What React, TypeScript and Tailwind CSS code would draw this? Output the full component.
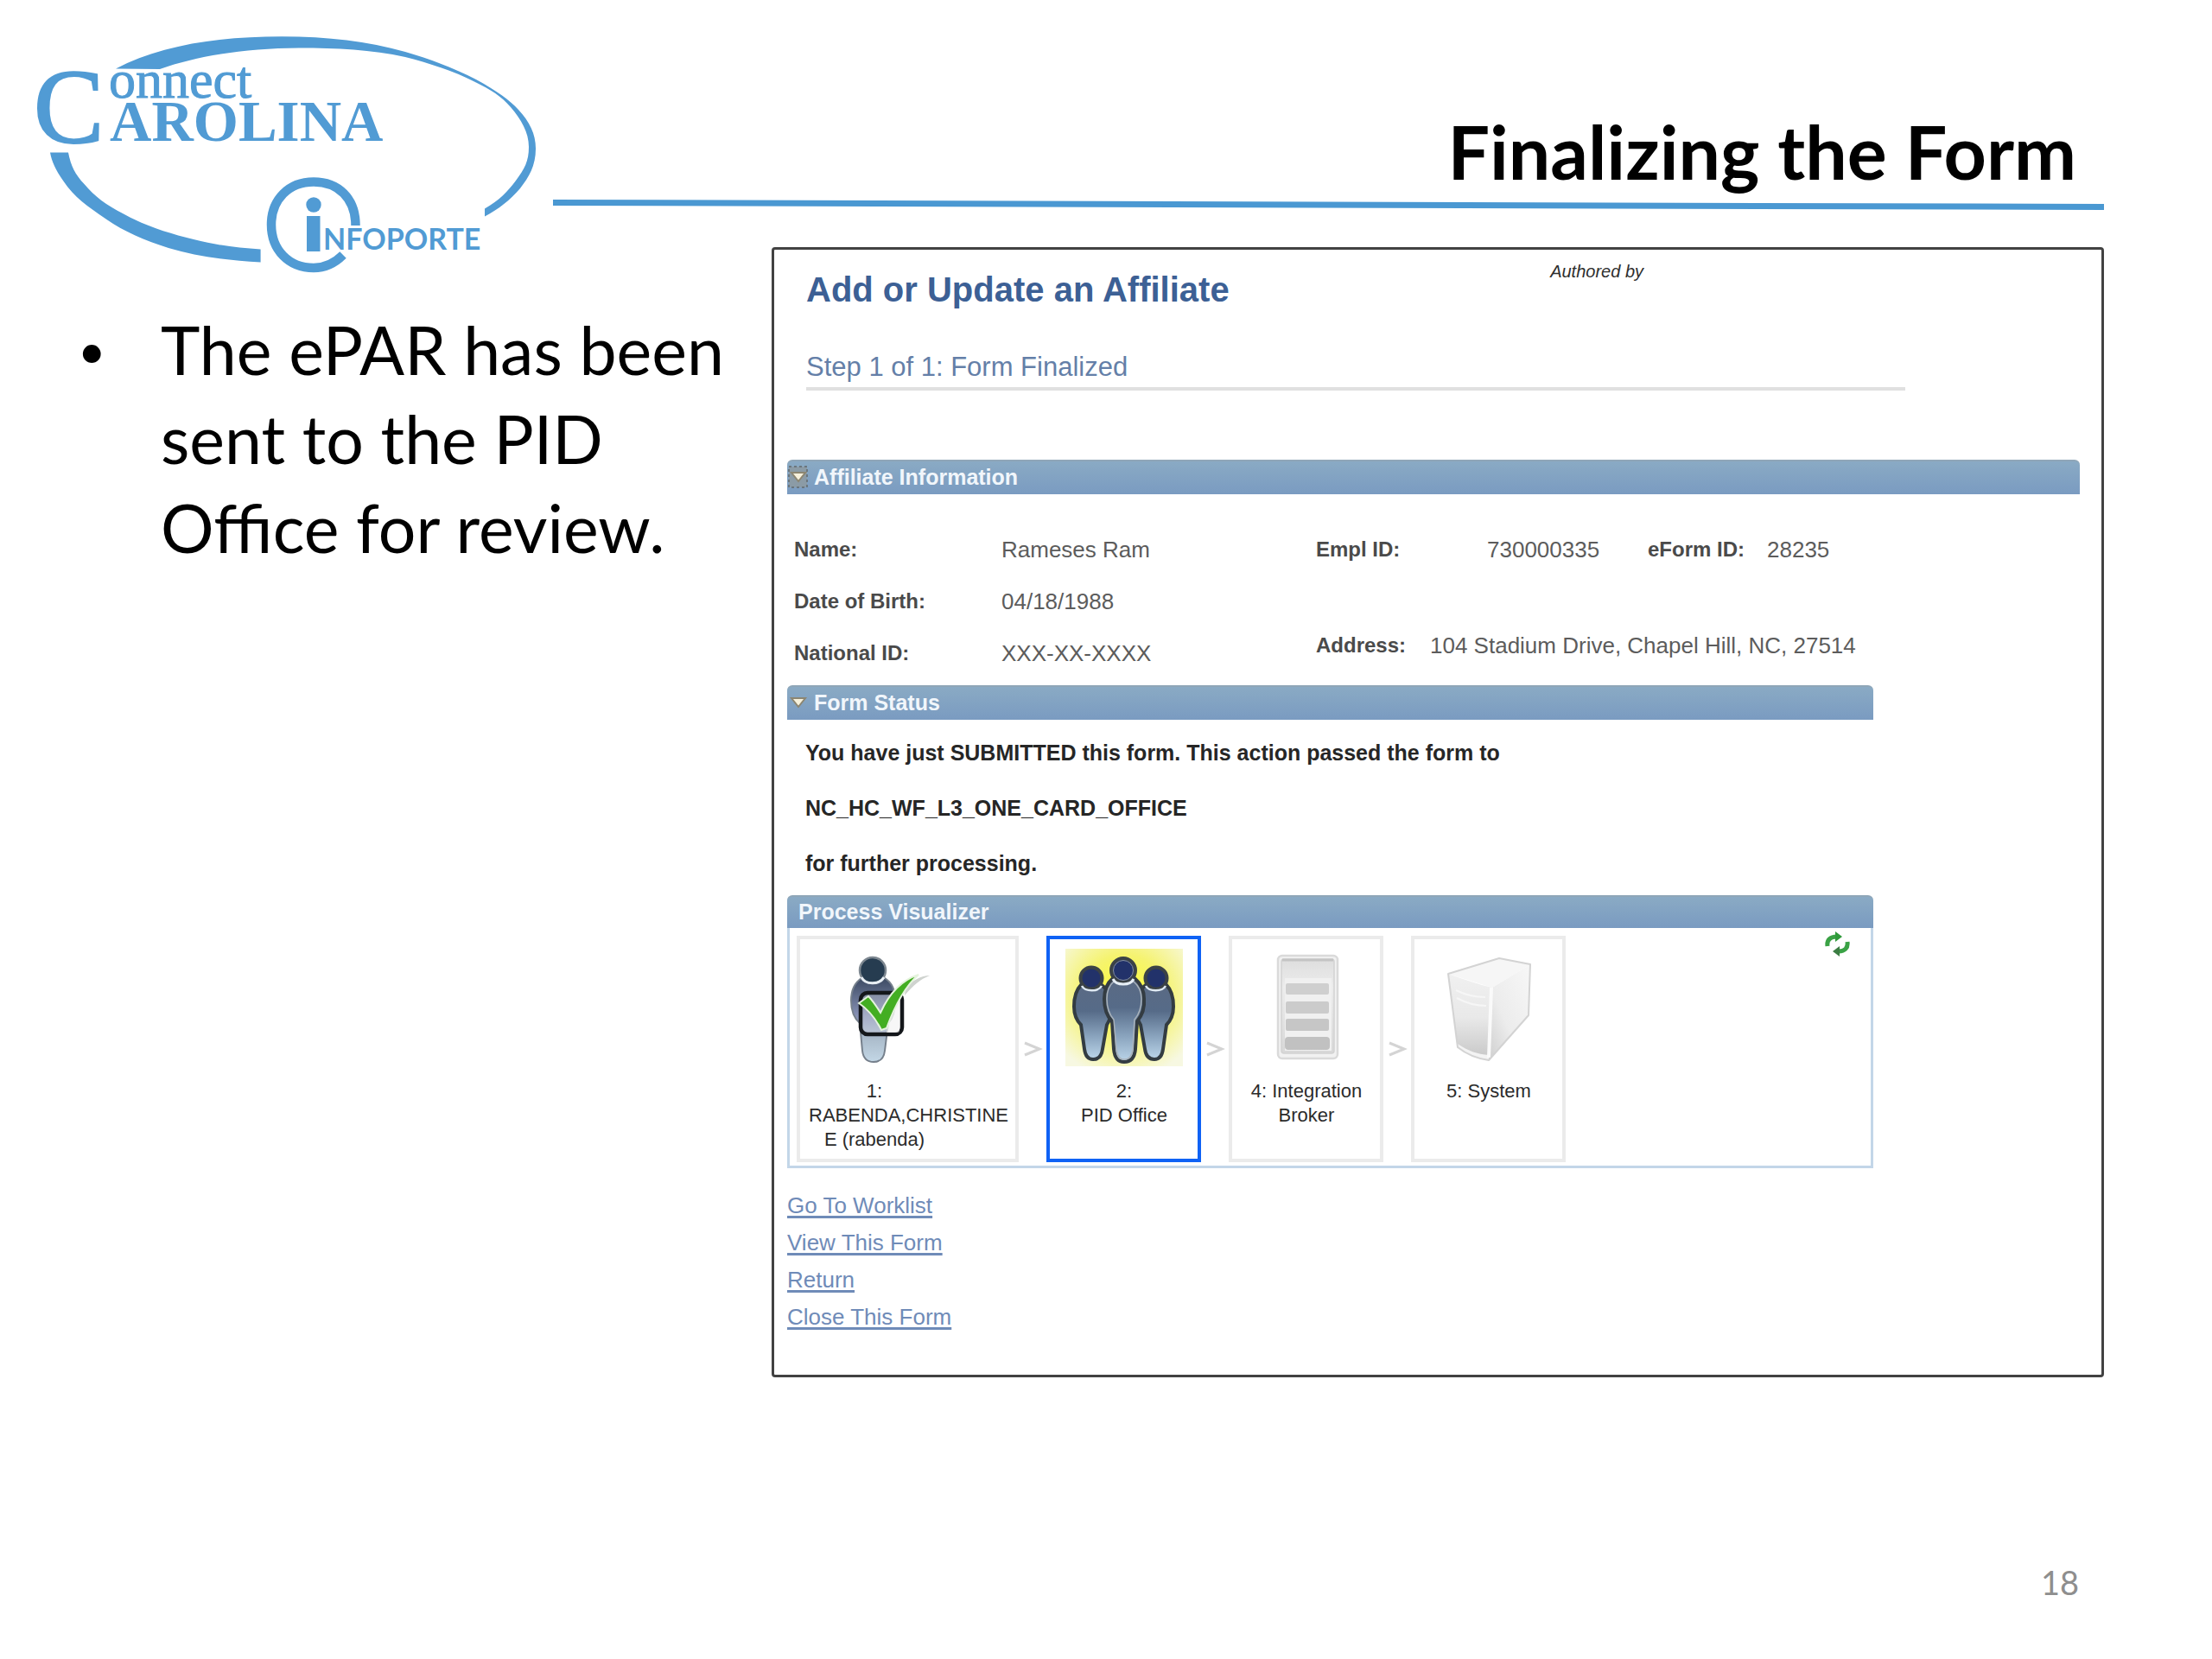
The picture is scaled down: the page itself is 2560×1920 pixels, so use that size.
import { useState, type ReactNode } from "react";

const links = ["Go To Worklist", "View This Form", "Return", "Close This Form"];

const leftFields = [
  { label: "Name:", value: "Rameses Ram" },
  { label: "Date of Birth:", value: "04/18/1988" },
  { label: "National ID:", value: "XXX-XX-XXXX" },
];

function Logo() {
  return (
    <svg
      viewBox="40 40 584 280"
      className="mt-10 h-[280px] w-[584px] shrink-0"
      fill="#519bd4"
      role="img"
      aria-label="Connect Carolina Infoporte"
    >
      {/* swoosh over the top and down the right side */}
      <path d="M134 79.500C185 53 250 42.300 326 42.300C380 42.300 425 48 469 60C500 69 528 80 551 92C575 105 590 116 600 127C613 141 620 155 620 172C620 192 612 205 602 218C590 232 577 242 561 250.500V241.500C578 232 588 221 597 209C607 195 612 187 612 170C612 153 603 138 591 124C581 112 567 103 551 95.500C527 83 500 74 469 66C430 57.500 390 55.500 346 55.500C285 56 230 64 185 80Z" />
      {/* lower left */}
      <path d="M58 176.500H79C82 192 87 202 97.500 213C109 227 124 238 142 247C167 261 195 270 224 277C252 284 275 287 301.600 288.500V303.500C262 301 228 297 195 287C166 278 142 267 122 253C102 239 86 229 73 209C64 196 60 187 58 176.500Z" />
      {/* circled i */}
      <path
        d="M411.500 261C411.500 229 391 210.500 363 210.500C334 210.500 314 231 314 260C314 289 334 310 363 310C377 310 388 304 397 295"
        fill="none"
        stroke="#519bd4"
        strokeWidth="10.500"
      />
      <circle cx="363" cy="237" r="8.700" />
      <rect x="355" y="250" width="15.500" height="41" />
      <text x="39" y="165" fontSize="122" fontFamily="Liberation Serif, serif" stroke="#519bd4" strokeWidth="2">C</text>
      <text x="126" y="113" fontSize="62" fontFamily="Liberation Serif, serif" stroke="#519bd4" strokeWidth="1">onnect</text>
      <text x="127" y="163" fontSize="67" fontWeight="700" fontFamily="Liberation Serif, serif">AROLINA</text>
      <text x="374" y="289" fontSize="34" fontWeight="700" fontFamily="Lato, sans-serif">NFOPORTE</text>
    </svg>
  );
}

function Bar({ children }: { children: ReactNode }) {
  return (
    <div className="flex items-center rounded-t-md border-t-2 border-[#8fa6b8] bg-gradient-to-b from-[#8aaac4] to-[#7a9bc1] pb-0.5 text-[25px] font-bold text-[#f1f6fb]">
      {children}
    </div>
  );
}

function SectionToggle({ title, open, focused, onClick }: {
  title: string;
  open: boolean;
  focused?: boolean;
  onClick: () => void;
}) {
  return (
    <h4 className="leading-9">
      <button type="button" aria-expanded={open} onClick={onClick} className="flex items-center gap-[7px]">
        <svg viewBox="0 0 24 28" className="h-7 w-6">
          {focused && (
            <rect x="2" y="2" width="21" height="24" fill="#8b9ba6" stroke="#6b767e" strokeWidth="2" strokeDasharray="3 3" />
          )}
          <path d="M5 9H21L13 19Z" fill="#f7f1dc" stroke="#8c8672" strokeWidth="2" />
        </svg>
        {title}
      </button>
    </h4>
  );
}

function Field({ label, value, labelClass, valueClass }: {
  label: string;
  value: string;
  labelClass: string;
  valueClass?: string;
}) {
  return (
    <div className="flex items-center leading-[60px]">
      <dt className={`text-[24px] font-bold text-[#4a4a4a] ${labelClass}`}>{label}</dt>
      <dd className={`text-[26px] whitespace-nowrap text-[#5c5c5c] ${valueClass ?? ""}`}>{value}</dd>
    </div>
  );
}

function CheckedPerson() {
  return (
    <svg viewBox="0 0 136 136" className="size-[136px]">
      <defs>
        <linearGradient id="single" x1="0" y1="0" x2="0" y2="1">
          <stop offset="0" stopColor="#3c4a63" />
          <stop offset="0.45" stopColor="#8791b5" />
          <stop offset="0.75" stopColor="#aebfce" />
          <stop offset="1" stopColor="#c3d7e6" />
        </linearGradient>
      </defs>
      <path
        d="M53 34C44 40 41 49 41 60C41 72 44 80 51 86L54 118C55 127 60 131 67 131C74 131 79 127 80 118L84 86C90 80 92 70 92 59C92 48 88 39 80 34Z"
        fill="url(#single)"
        stroke="#76808c"
        strokeWidth="2"
      />
      <circle cx="66" cy="25" r="15" fill="#263c50" stroke="#7d8790" strokeWidth="2.500" />
      <path d="M53 33C57 42 74 42 79 33" fill="none" stroke="#e8eef4" strokeWidth="3" />
      <rect x="52" y="51" width="48" height="48" rx="8" fill="#ffffff" fillOpacity="0.25" stroke="#14171b" strokeWidth="4.500" />
      <path d="M84 62L92 62L97 60V94C97 96 96 97 94 97H82Z" fill="#f4f4f4" fillOpacity="0.700" />
      <path d="M104 45C112 37 122 31 132 31C122 35 113 42 103 54Z" fill="#cfd3cf" />
      <path
        d="M50 63L61 55C66 60 70 66 75 74C84 54 97 37 119 30C104 43 92 65 82 92L76 94C70 82 62 71 50 63Z"
        fill="#43ae22"
        stroke="#e4f3dc"
        strokeWidth="2"
      />
    </svg>
  );
}

function PeopleGroup() {
  const side = "M18 42C12 48 10 57 10 67C10 76 13 83 18 88L22 116C23 124 26 128 32 128C38 128 42 124 43 116L48 88C52 82 54 74 53 64C52 54 48 46 42 42Z";
  return (
    <svg viewBox="0 0 136 136" className="size-[136px]">
      <defs>
        <radialGradient id="glow" cx="0.5" cy="0.4" r="0.700">
          <stop offset="0" stopColor="#fdfd2e" />
          <stop offset="0.5" stopColor="#f5f370" />
          <stop offset="1" stopColor="#f7f8e2" />
        </radialGradient>
        <linearGradient id="group" x1="0" y1="0" x2="0" y2="1">
          <stop offset="0" stopColor="#5a6a84" />
          <stop offset="0.35" stopColor="#566b88" />
          <stop offset="0.700" stopColor="#8ba5bf" />
          <stop offset="1" stopColor="#bcd6ea" />
        </linearGradient>
      </defs>
      <rect width="136" height="136" fill="url(#glow)" />
      {[false, true].map((flip) => (
        <g key={String(flip)} transform={flip ? "translate(135 0) scale(-1 1)" : undefined}>
          <path d={side} fill="url(#group)" stroke="#333c42" strokeWidth="4" />
          <circle cx="30" cy="34" r="12.500" fill="#22326a" stroke="#3b4246" strokeWidth="4" />
          <path d="M19 43C23 50 38 50 42 43" fill="none" stroke="#dfe9f2" strokeWidth="2.500" />
        </g>
      ))}
      <path
        d="M55 34C48 40 45 48 45 58C45 69 47 77 54 84L56 116C57 127 61 131 68 131C75 131 80 127 81 116L83 84C89 77 92 69 91 58C91 48 87 40 80 34Z"
        fill="url(#group)"
        stroke="#343c42"
        strokeWidth="4"
      />
      <path
        d="M56 38C50 43 48 50 48 58C48 68 50 75 56 82L59 116C60 125 63 128 68 128C73 128 77 125 78 116L80 82C86 75 88 68 88 58C88 50 85 43 79 38Z"
        fill="none"
        stroke="#a9b2ba"
        strokeWidth="1.500"
      />
      <circle cx="67" cy="25" r="14" fill="#22326a" stroke="#3b4246" strokeWidth="4" />
      <circle cx="67" cy="25" r="11.500" fill="none" stroke="#87909c" strokeWidth="1" />
      <path d="M55 35C59 43 75 43 79 35" fill="none" stroke="#e6eef5" strokeWidth="3" />
    </svg>
  );
}

function ServerRack() {
  return (
    <svg viewBox="0 0 136 136" className="size-[136px]">
      <defs>
        <linearGradient id="rack" x1="0" y1="0" x2="0" y2="1">
          <stop offset="0" stopColor="#dedede" />
          <stop offset="0.3" stopColor="#ececec" />
          <stop offset="1" stopColor="#d8d8d8" />
        </linearGradient>
      </defs>
      <rect x="35" y="8" width="69" height="119" rx="5" fill="#f1f1f1" stroke="#dadada" strokeWidth="2.500" />
      <rect x="39" y="12" width="61" height="109" rx="3" fill="url(#rack)" stroke="#d2d2d2" strokeWidth="1.500" />
      <path d="M40 13H99" stroke="#c4c4c4" strokeWidth="3" />
      <path d="M43 34H97V118H43Z" fill="#f0f0f0" />
      <rect x="44" y="40" width="50" height="13" rx="2" fill="#cfcfcf" />
      <rect x="44" y="61" width="50" height="14" rx="2" fill="#cbcbcb" />
      <rect x="44" y="81" width="50" height="14" rx="2" fill="#c6c6c6" />
      <rect x="43" y="102" width="52" height="15" rx="4" fill="#c1c1c1" />
    </svg>
  );
}

function Tower() {
  return (
    <svg viewBox="0 0 136 136" className="size-[136px]">
      <defs>
        <linearGradient id="front" x1="0" y1="0" x2="0" y2="1">
          <stop offset="0" stopColor="#f0f0f0" />
          <stop offset="0.500" stopColor="#e9e9e9" />
          <stop offset="1" stopColor="#c6c6c6" />
        </linearGradient>
        <linearGradient id="flank" x1="1" y1="0" x2="0" y2="1">
          <stop offset="0" stopColor="#f7f7f7" />
          <stop offset="0.600" stopColor="#ececec" />
          <stop offset="1" stopColor="#cfcfcf" />
        </linearGradient>
      </defs>
      <path d="M72 45L116 18L114 77L68 129Z" fill="url(#flank)" />
      <path d="M21 29L80 11L116 18L72 45Z" fill="#f6f6f6" />
      <path d="M21 29C38 35 55 41 72 45L68 129C54 127 42 122 32 114Z" fill="url(#front)" />
      <path d="M32 110C43 118 55 122 68 123V129C54 127 42 122 32 114Z" fill="#f3f3f3" />
      <path d="M71 45L68 126" stroke="#fafafa" strokeWidth="4" />
      <path d="M30 48C42 54 54 56 64 56M31 57C42 63 54 66 65 66" fill="none" stroke="#f6f6f6" strokeWidth="2" />
      <path
        d="M21 29L80 11L116 18L114 77L68 129C54 127 42 122 32 114Z"
        fill="none"
        stroke="#d3d3d3"
        strokeWidth="2"
        strokeLinejoin="round"
      />
    </svg>
  );
}

function RefreshIcon() {
  return (
    <svg viewBox="0 0 29 29" className="size-[29px]">
      <path d="M3 17C2 10 6 6 14 6" fill="none" stroke="#3aa245" strokeWidth="5" />
      <path d="M12 0L20 6L12 12Z" fill="#2f9a3a" />
      <path d="M26 12C27 19 23 23 16 23" fill="none" stroke="#3aa245" strokeWidth="5" />
      <path d="M17 17L9 23L17 29Z" fill="#3c7d43" />
    </svg>
  );
}

const steps = [
  { label: "1: RABENDA,CHRISTINE E (rabenda)", icon: <CheckedPerson />, box: "w-[257px] border-[#ebebeb]" },
  { label: "2: PID Office", icon: <PeopleGroup />, box: "w-[179px] border-[#0f62f5]" },
  { label: "4: Integration Broker", icon: <ServerRack />, box: "w-[179px] border-[#ebebeb]" },
  { label: "5: System", icon: <Tower />, box: "w-[179px] border-[#ebebeb]" },
];

// step names that break after the number
const brokenLabels: Record<string, ReactNode> = {
  "2: PID Office": <>2:<br />PID Office</>,
};

export default function App() {
  const [showInfo, setShowInfo] = useState(true);
  const [showStatus, setShowStatus] = useState(true);

  return (
    <main className="flex min-h-screen flex-col bg-white font-[Lato,sans-serif] text-black">
      <header className="flex items-start gap-4 pr-[125px] pl-10">
        <Logo />
        <div className="flex-1">
          <h1 className="pt-[120px] pr-8 text-right text-[86px] leading-[110px] font-bold">
            Finalizing the Form
          </h1>
          <svg viewBox="0 0 1796 14" preserveAspectRatio="none" className="h-3.5 w-full">
            <path d="M0 1L1796 6V13L0 8Z" fill="#4a98d2" />
          </svg>
        </div>
      </header>

      <div className="-mt-[34px] grid grid-cols-[803fr_1542fr] items-start pr-[125px] pl-[90px]">
        <ul className="pt-[67px]">
          <li className="flex text-[77px] leading-[103px]">
            <span className="w-24 shrink-0 text-[56px]">•</span>
            <p>
              The ePAR has been
              <br />
              sent to the PID
              <br />
              Office for review.
            </p>
          </li>
        </ul>

        <section className="rounded-sm border-[3px] border-[#424242] pr-[25px] pb-[45px] pl-[15px] font-['Liberation_Sans',sans-serif]">
          <div className="grid grid-cols-[860fr_612fr] items-start pt-[13px] pl-[22px]">
            <h2 className="pt-2 text-[40px] leading-[50px] font-bold text-[#3c6095]">
              Add or Update an Affiliate
            </h2>
            <p className="text-[20px] leading-6 text-[#2e2e2e] italic">Authored by</p>
          </div>
          <h3 className="mt-[45px] ml-[22px] w-[85%] border-b-4 border-[#e0e0e0] pb-[3px] text-[31px] leading-10 text-[#647fa8]">
            Step 1 of 1: Form Finalized
          </h3>

          <div className="mt-20">
            <Bar>
              <SectionToggle title="Affiliate Information" open={showInfo} focused onClick={() => setShowInfo(!showInfo)} />
            </Bar>
            {showInfo && (
              <div className="flex pt-[34px] pb-[7px] pl-2">
                <dl className="w-[604px]">
                  {leftFields.map((f) => (
                    <Field key={f.label} label={f.label} value={f.value} labelClass="w-[240px]" />
                  ))}
                </dl>
                <dl className="flex flex-col gap-[51px]">
                  <div className="flex">
                    <Field label="Empl ID:" value="730000335" labelClass="w-[198px]" valueClass="w-[186px]" />
                    <Field label="eForm ID:" value="28235" labelClass="w-[138px]" />
                  </div>
                  <Field label="Address:" value="104 Stadium Drive, Chapel Hill, NC, 27514" labelClass="w-[132px]" />
                </dl>
              </div>
            )}
          </div>

          <div className="w-[84%]">
            <Bar>
              <SectionToggle title="Form Status" open={showStatus} onClick={() => setShowStatus(!showStatus)} />
            </Bar>
            {showStatus && (
              <div className="pt-1.5 pb-[5px] pl-[21px] text-[25px] leading-[64px] font-bold text-[#262626]">
                <p>You have just SUBMITTED this form. This action passed the form to</p>
                <p>NC_HC_WF_L3_ONE_CARD_OFFICE</p>
                <p>for further processing.</p>
              </div>
            )}

            <Bar>
              <h4 className="pl-[13px] leading-[34px]">Process Visualizer</h4>
            </Bar>
            <div className="flex items-start justify-between border-x-3 border-b-3 border-[#c3d6e8] pr-6 pb-1 pl-2">
              <ol className="flex pt-[9px]">
                {steps.map((step, i) => (
                  <li key={step.label} className="flex items-center">
                    {i > 0 && (
                      <svg viewBox="0 0 32 20" className="h-5 w-8" aria-hidden="true">
                        <path d="M7 3L24 10L7 17" fill="none" stroke="#d4d4d4" strokeWidth="3" />
                      </svg>
                    )}
                    <div className={`h-[262px] border-4 px-2.5 pt-[11px] ${step.box}`}>
                      <div className="flex w-[152px] flex-col items-center gap-[15px] text-center text-[22px] leading-7 text-[#2b2b2b]">
                        {step.icon}
                        <p className="w-full">{brokenLabels[step.label] ?? step.label}</p>
                      </div>
                    </div>
                  </li>
                ))}
              </ol>
              <button type="button" aria-label="Refresh" className="pt-1">
                <RefreshIcon />
              </button>
            </div>
          </div>

          <nav className="mt-[22px] flex flex-col items-start text-[26px] leading-[43px] text-[#6f8bb8]">
            {links.map((text) => (
              <a key={text} href="#" className="underline decoration-[3px] underline-offset-3">
                {text}
              </a>
            ))}
          </nav>
        </section>
      </div>

      <footer className="mt-auto pr-[154px] pb-[66px] text-right text-[38px] leading-[46px] text-[#8e8e8e]">
        18
      </footer>
    </main>
  );
}
